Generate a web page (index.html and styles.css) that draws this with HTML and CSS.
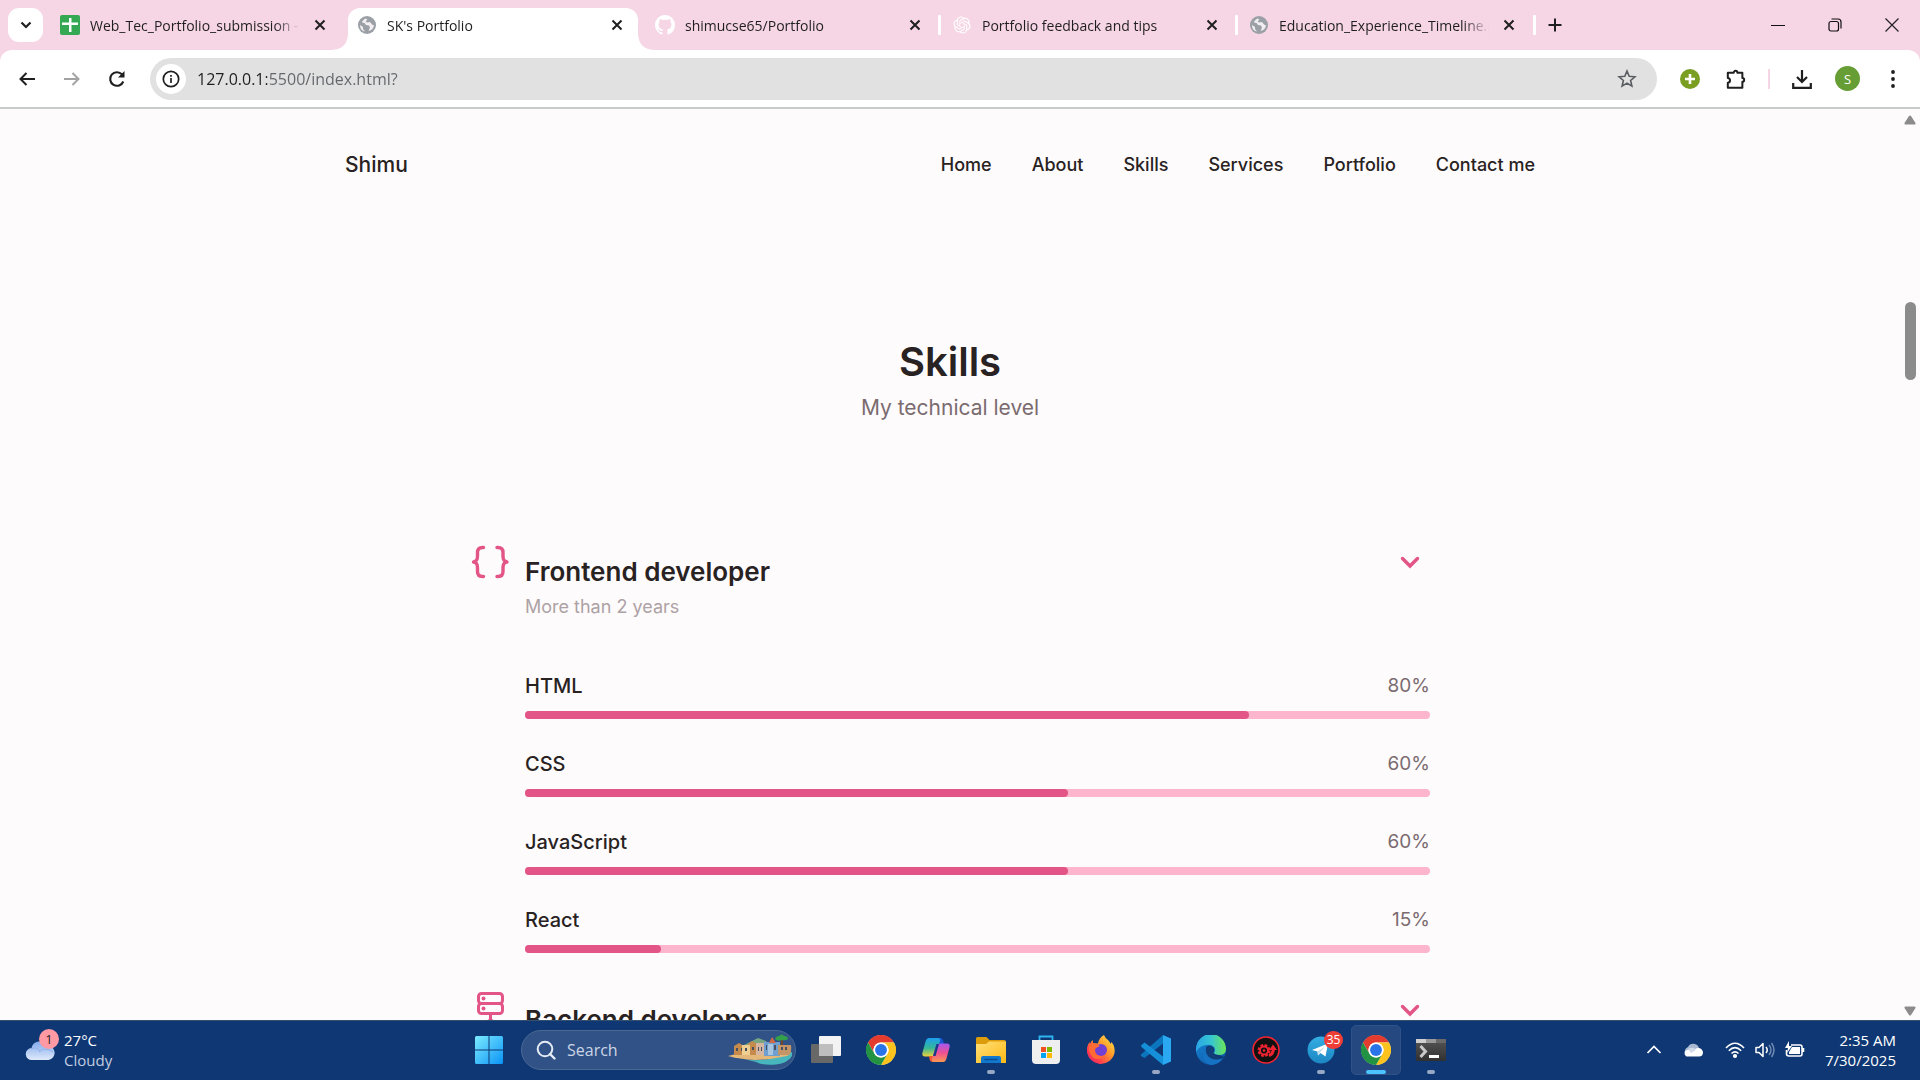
FILE: index.html
```html
<!DOCTYPE html>
<html lang="en">
<head>
<meta charset="utf-8">
<title>SK's Portfolio</title>
<link rel="stylesheet" href="styles.css">
</head>
<body>
<svg class="defs" aria-hidden="true">
  <defs>
    <symbol id="x" viewBox="0 0 14 14"><path d="M2.5 2.5l9 9m0-9l-9 9" fill="none" stroke="currentColor" stroke-width="2"/></symbol>
    <symbol id="globe" viewBox="0 0 20 20"><circle cx="10" cy="10" r="9" fill="#9aa0a6"/><path d="M9 3.500c-2 .5-3.500 2-4 4l2.500.5 1.500 2 3 .5 1 2-1.500 3.500c3-.5 5-2.500 5.500-5.500l-2-1-2-2.500-3 .5-1.500-1.500 2-1zM3 10l3 2v2l2 2.500C5 16 3 13.500 3 10z" fill="#f3eef1"/></symbol>
    <symbol id="chrome" viewBox="0 0 48 48">
      <circle cx="24" cy="24" r="23.500" fill="#fff"/>
      <path d="M24 12h20.800A24 24 0 0 0 3.200 12l10.400 18A12 12 0 0 1 24 12z" fill="#e33b2e"/>
      <path d="M34.400 30L24 48A24 24 0 0 0 44.800 12H24a12 12 0 0 1 10.400 18z" fill="#fcc31f"/>
      <path d="M13.600 30L3.200 12A24 24 0 0 0 24 48l10.400-18a12 12 0 0 1-20.800 0z" fill="#229342"/>
      <circle cx="24" cy="24" r="12" fill="#fff"/><circle cx="24" cy="24" r="9.500" fill="#2a74ea"/>
    </symbol>
    <symbol id="chevron" viewBox="0 0 20 14"><path d="M2.500 3.500L10 11l7.500-7.500" fill="none" stroke="currentColor" stroke-width="3.400" stroke-linecap="round"/></symbol>
    <linearGradient id="gWin" x1="0" y1="0" x2="1" y2="1"><stop offset="0" stop-color="#7cebff"/><stop offset="1" stop-color="#0a93f5"/></linearGradient>
    <linearGradient id="gCloud" x1="0" y1="0" x2="0" y2="1"><stop offset="0" stop-color="#83a9ec"/><stop offset="1" stop-color="#dfe9fa"/></linearGradient>
    <linearGradient id="gFolder" x1="0" y1="0" x2="1" y2="1"><stop offset="0" stop-color="#ffe07a"/><stop offset="1" stop-color="#fdb913"/></linearGradient>
    <linearGradient id="gCopA" x1="0" y1="0" x2="0" y2="1"><stop offset="0" stop-color="#1d9ef0"/><stop offset=".55" stop-color="#35b896"/><stop offset="1" stop-color="#f0d23a"/></linearGradient>
    <linearGradient id="gCopB" x1="0" y1="0" x2="0" y2="1"><stop offset="0" stop-color="#a259f0"/><stop offset=".5" stop-color="#ef4f94"/><stop offset="1" stop-color="#fb9850"/></linearGradient>
    <linearGradient id="gFox" x1="1" y1="0" x2="0" y2="1"><stop offset="0" stop-color="#fff14f"/><stop offset=".4" stop-color="#ff9a2a"/><stop offset=".75" stop-color="#ff3a4f"/><stop offset="1" stop-color="#d61d7c"/></linearGradient>
    <linearGradient id="gEdgeA" x1="0" y1="0" x2="1" y2="0"><stop offset="0" stop-color="#2aa6e6"/><stop offset=".5" stop-color="#35c5d2"/><stop offset="1" stop-color="#6be556"/></linearGradient>
    <linearGradient id="gEdgeB" x1="0" y1="0" x2="1" y2="1"><stop offset="0" stop-color="#1787d8"/><stop offset="1" stop-color="#0c4f9c"/></linearGradient>
    <linearGradient id="gTg" x1="0" y1="0" x2="0" y2="1"><stop offset="0" stop-color="#35aee2"/><stop offset="1" stop-color="#1b86c3"/></linearGradient>
    <linearGradient id="gTerm" x1="0" y1="0" x2="0" y2="1"><stop offset="0" stop-color="#565656"/><stop offset="1" stop-color="#303030"/></linearGradient>
  </defs>
</svg>

<div class="window">
  <div class="tabstrip">
    <button class="tab-search" aria-label="Search tabs"><svg width="12" height="9" viewBox="0 0 12 9"><path d="M1.500 1.500L6 6l4.500-4.500" fill="none" stroke="#1f1f1f" stroke-width="2.200"/></svg></button>
    <div class="tabs">
      <div class="tab">
        <svg class="favicon" viewBox="0 0 20 20"><rect width="20" height="20" rx="2" fill="#34a853"/><path d="M9 3h2.500v4.500H18V10h-6.500v7H9v-7H2V7.500h7z" fill="#fff"/></svg>
        <span class="tab-title">Web_Tec_Portfolio_submission - Google</span>
        <button class="tab-close" aria-label="Close tab"><svg><use href="#x"/></svg></button>
      </div>
      <div class="tab active">
        <svg class="favicon"><use href="#globe"/></svg>
        <span class="tab-title">SK's Portfolio</span>
        <button class="tab-close" aria-label="Close tab"><svg><use href="#x"/></svg></button>
      </div>
      <div class="tab">
        <svg class="favicon" viewBox="0 0 16 16"><path fill="#fff" d="M8 0C3.580 0 0 3.580 0 8c0 3.540 2.290 6.530 5.470 7.590.4.070.55-.17.55-.38 0-.19-.01-.82-.01-1.490-2.010.37-2.530-.49-2.690-.94-.09-.23-.48-.94-.82-1.130-.28-.15-.68-.52-.01-.53.63-.01 1.080.58 1.230.82.72 1.210 1.870.87 2.330.66.07-.52.28-.87.51-1.070-1.780-.2-3.640-.89-3.640-3.950 0-.87.31-1.590.82-2.150-.08-.2-.36-1.020.08-2.120 0 0 .67-.21 2.200.82.64-.18 1.320-.27 2-.27s1.360.09 2 .27c1.530-1.040 2.200-.82 2.200-.82.44 1.100.16 1.920.08 2.120.51.56.82 1.270.82 2.150 0 3.070-1.870 3.750-3.650 3.950.29.25.54.73.54 1.480 0 1.070-.01 1.930-.01 2.200 0 .21.15.46.55.38A8.010 8.010 0 0 0 16 8c0-4.420-3.580-8-8-8z"/></svg>
        <span class="tab-title">shimucse65/Portfolio</span>
        <button class="tab-close" aria-label="Close tab"><svg><use href="#x"/></svg></button>
      </div>
      <div class="tab divided">
        <svg class="favicon" viewBox="-2 -2 28 28"><path fill="#fff" d="M22.2819 9.8211a5.9847 5.9847 0 0 0-.5157-4.9108 6.0462 6.0462 0 0 0-6.5098-2.9A6.0651 6.0651 0 0 0 4.9807 4.1818a5.9847 5.9847 0 0 0-3.9977 2.9 6.0462 6.0462 0 0 0 .7427 7.0966 5.98 5.98 0 0 0 .511 4.9107 6.051 6.051 0 0 0 6.5146 2.9001A5.9847 5.9847 0 0 0 13.2599 24a6.0557 6.0557 0 0 0 5.7718-4.2058 5.9894 5.9894 0 0 0 3.9977-2.9001 6.0557 6.0557 0 0 0-.7475-7.0729zm-9.022 12.6081a4.4755 4.4755 0 0 1-2.8764-1.0408l.1419-.0804 4.7783-2.7582a.7948.7948 0 0 0 .3927-.6813v-6.7369l2.02 1.1686a.071.071 0 0 1 .038.052v5.5826a4.504 4.504 0 0 1-4.4945 4.4944zm-9.6607-4.1254a4.4708 4.4708 0 0 1-.5346-3.0137l.142.0852 4.783 2.7582a.7712.7712 0 0 0 .7806 0l5.8428-3.3685v2.3324a.0804.0804 0 0 1-.0332.0615L9.74 19.9502a4.4992 4.4992 0 0 1-6.1408-1.6464zM2.3408 7.8956a4.485 4.485 0 0 1 2.3655-1.9728V11.6a.7664.7664 0 0 0 .3879.6765l5.8144 3.3543-2.0201 1.1685a.0757.0757 0 0 1-.071 0l-4.8303-2.7865A4.504 4.504 0 0 1 2.3408 7.872zm16.5963 3.8558L13.1038 8.364 15.1192 7.2a.0757.0757 0 0 1 .071 0l4.8303 2.7913a4.4944 4.4944 0 0 1-.6765 8.1042v-5.6772a.79.79 0 0 0-.407-.667zm2.0107-3.0231l-.142-.0852-4.7735-2.7818a.7759.7759 0 0 0-.7854 0L9.409 9.2297V6.8974a.0662.0662 0 0 1 .0284-.0615l4.8303-2.7866a4.4992 4.4992 0 0 1 6.6802 4.66zM8.3065 12.863l-2.02-1.1638a.0804.0804 0 0 1-.038-.0567V6.0742a4.4992 4.4992 0 0 1 7.3757-3.4537l-.142.0805L8.704 5.459a.7948.7948 0 0 0-.3927.6813zm1.0976-2.3654l2.602-1.4998 2.6069 1.4998v2.9994l-2.5974 1.4997-2.6067-1.4997Z"/></svg>
        <span class="tab-title">Portfolio feedback and tips</span>
        <button class="tab-close" aria-label="Close tab"><svg><use href="#x"/></svg></button>
      </div>
      <div class="tab divided">
        <svg class="favicon"><use href="#globe"/></svg>
        <span class="tab-title">Education_Experience_Timeline.pdf</span>
        <button class="tab-close" aria-label="Close tab"><svg><use href="#x"/></svg></button>
      </div>
    </div>
    <button class="new-tab" aria-label="New tab"><svg width="14" height="14" viewBox="0 0 14 14"><path d="M7 .5v13M.5 7h13" stroke="#1f1f1f" stroke-width="2"/></svg></button>
    <div class="window-controls">
      <button aria-label="Minimize"><svg width="14" height="14" viewBox="0 0 14 14"><path d="M0 7.500h14" stroke="#111"/></svg></button>
      <button aria-label="Restore"><svg width="14" height="14" viewBox="0 0 14 14" fill="none" stroke="#111" stroke-width="1.200"><rect x="1" y="3.500" width="9.500" height="9.500" rx="2"/><path d="M3.500 1H10a3 3 0 0 1 3 3v6.500"/></svg></button>
      <button aria-label="Close"><svg width="14" height="14" viewBox="0 0 14 14"><path d="M.5.5l13 13m0-13l-13 13" stroke="#222" stroke-width="1.200"/></svg></button>
    </div>
  </div>

  <div class="toolbar">
    <button class="tool" aria-label="Back"><svg viewBox="0 0 20 20"><path d="M18 10H3.500m6-6l-6 6 6 6" fill="none" stroke="#1f1f1f" stroke-width="2"/></svg></button>
    <button class="tool" aria-label="Forward"><svg viewBox="0 0 20 20"><path d="M2 10h14.500m-6-6l6 6-6 6" fill="none" stroke="#a3a3a3" stroke-width="2"/></svg></button>
    <button class="tool" aria-label="Reload"><svg viewBox="0 0 20 20"><path d="M16.300 12.500A6.800 6.800 0 1 1 15 5.400l1.500 1.600" fill="none" stroke="#1f1f1f" stroke-width="2.100"/><path d="M17.500 2v6.500H11z" fill="#1f1f1f"/></svg></button>
    <div class="omnibox">
      <button class="site-info" aria-label="Site information"><svg viewBox="0 0 18 18"><circle cx="9" cy="9" r="7.700" fill="none" stroke="#1f1f1f" stroke-width="1.700"/><path d="M9 8v5M9 5v1.700" stroke="#1f1f1f" stroke-width="1.700"/></svg></button>
      <input class="url" aria-label="Address" value="127.0.0.1:5500/index.html?">
      <button class="bookmark" aria-label="Bookmark"><svg width="20" height="20" viewBox="0 0 20 20"><path d="M10 2l2.200 5.300 5.700.5-4.300 3.700 1.300 5.600-4.900-3-4.900 3 1.300-5.600L2.100 7.800l5.700-.5z" fill="none" stroke="#5a5d61" stroke-width="1.600"/></svg></button>
    </div>
    <div class="extensions">
      <button class="tool" aria-label="Add"><svg viewBox="0 0 20 20"><circle cx="10" cy="10" r="10" fill="#7a9e22"/><path d="M10 5v10M5 10h10" stroke="#fff" stroke-width="2.600"/></svg></button>
      <button class="tool" aria-label="Extensions"><svg viewBox="0 0 22 22"><path d="M2 4h6.500a2 2 0 0 1 4 0H18v6a2 2 0 0 1 0 4v6.500H2v-5.500c3 0 3.500-5 0-5z" fill="none" stroke="#1f1f1f" stroke-width="2.200" stroke-linejoin="round"/></svg></button>
      <span class="tool-sep"></span>
      <button class="tool" aria-label="Downloads"><svg viewBox="0 0 20 20"><path d="M10 1v12m-5-5l5 5 5-5M1.200 14v4.800h17.600V14" fill="none" stroke="#1f1f1f" stroke-width="2.200"/></svg></button>
      <button class="avatar" aria-label="Profile">S</button>
      <button class="tool" aria-label="Menu"><svg viewBox="0 0 20 20" fill="#1f1f1f"><circle cx="10" cy="3" r="1.900"/><circle cx="10" cy="10" r="1.900"/><circle cx="10" cy="17" r="1.900"/></svg></button>
    </div>
  </div>

  <div class="viewport">
    <div class="page">
      <header class="site-header">
        <a class="logo" href="#">Shimu</a>
        <nav>
          <a href="#home">Home</a>
          <a href="#about">About</a>
          <a href="#skills">Skills</a>
          <a href="#services">Services</a>
          <a href="#portfolio">Portfolio</a>
          <a href="#contact">Contact me</a>
        </nav>
      </header>
      <section class="skills" id="skills">
        <h2>Skills</h2>
        <p class="subtitle">My technical level</p>
        <div class="groups">
          <article class="group">
            <div class="group-head">
              <svg class="group-icon" viewBox="0 0 40 40"><path d="M13.500 5.500h-1c-3.500 0-5 1.500-5 5v3.500c0 4-1 5.500-4 6 3 .5 4 2 4 6v3.500c0 3.500 1.500 5 5 5h1M27 5.500h1c3.500 0 5 1.500 5 5v3.500c0 4 1 5.500 4 6-3 .5-4 2-4 6v3.500c0 3.500-1.500 5-5 5h-1" fill="none" stroke="currentColor" stroke-width="3.400" stroke-linecap="round" stroke-linejoin="round"/></svg>
              <div class="group-title"><h3>Frontend developer</h3><p>More than 2 years</p></div>
              <button class="toggle" aria-label="Toggle frontend"><svg><use href="#chevron"/></svg></button>
            </div>
            <ul class="bars">
              <li><span class="name">HTML</span><span class="value">80%</span><div class="bar"><div class="fill" style="width:80%"></div></div></li>
              <li><span class="name">CSS</span><span class="value">60%</span><div class="bar"><div class="fill" style="width:60%"></div></div></li>
              <li><span class="name">JavaScript</span><span class="value">60%</span><div class="bar"><div class="fill" style="width:60%"></div></div></li>
              <li><span class="name">React</span><span class="value">15%</span><div class="bar"><div class="fill" style="width:15%"></div></div></li>
            </ul>
          </article>
          <article class="group">
            <div class="group-head">
              <svg class="group-icon" viewBox="0 0 40 40"><g fill="none" stroke="currentColor" stroke-width="3"><rect x="8.500" y="3.500" width="24" height="10" rx="3"/><rect x="8.500" y="13.500" width="24" height="10" rx="3"/><path d="M20.500 23.500v8M6 33h29"/></g><circle cx="13.500" cy="8.500" r="2" fill="currentColor"/><circle cx="13.500" cy="18.500" r="2" fill="currentColor"/><circle cx="20.500" cy="33" r="4" fill="currentColor"/></svg>
              <div class="group-title"><h3>Backend developer</h3></div>
              <button class="toggle" aria-label="Toggle backend"><svg><use href="#chevron"/></svg></button>
            </div>
          </article>
        </div>
      </section>
    </div>
    <div class="scrollbar" aria-hidden="true">
      <svg width="14" height="12" viewBox="0 0 14 12"><path d="M6 2L1.500 9q-.5 1.500 1 1.500h9q1.500 0 1-1.500L8 2Q7 .8 6 2z" fill="#8b8b8b"/></svg>
      <div class="track"><div class="thumb"></div></div>
      <svg width="14" height="12" viewBox="0 0 14 12"><path d="M6 10L1.500 3q-.5-1.500 1-1.500h9q1.500 0 1 1.500L8 10q-1 1.200-2 0z" fill="#8b8b8b"/></svg>
    </div>
  </div>

  <footer class="taskbar">
    <button class="weather">
      <span class="weather-icon">
        <svg width="30" height="22" viewBox="0 0 30 22"><path d="M7 21a6 6 0 0 1-.5-12A8.500 8.500 0 0 1 22 6.500 7.300 7.300 0 0 1 23.500 21z" fill="url(#gCloud)"/><path d="M6 10q5-3 9 2M14 13q6-6 14 0" fill="none" stroke="#91b2ec"/></svg>
        <span class="badge pink">1</span>
      </span>
      <span class="weather-text"><span>27°C</span><span class="dim">Cloudy</span></span>
    </button>

    <div class="apps">
      <button class="app" aria-label="Start"><svg viewBox="0 0 30 30" fill="url(#gWin)"><path d="M2.500 1H14.500v13.500H1V2.500Q1 1 2.500 1zM15.500 1H27.500Q29 1 29 2.500v12H15.500zM1 15.500h13.500V29h-12Q1 29 1 27.500zM15.500 15.500H29v12q0 1.500-1.500 1.500h-12z"/></svg></button>
      <label class="search">
        <svg width="20" height="20" viewBox="0 0 20 20"><circle cx="9" cy="9" r="7.300" fill="none" stroke="#e6ecf5" stroke-width="2"/><path d="M14 14l4.500 4.500" stroke="#e6ecf5" stroke-width="2.400" stroke-linecap="round"/></svg>
        <input type="text" placeholder="Search" aria-label="Search">
        <svg width="64" height="32" viewBox="0 0 64 32">
          <path d="M14 12L30 4l8 3 4 5v8H12z" fill="#78a683"/>
          <path d="M4 22Q32 32 64 18v4q-4 7-16 8.500-14 1-20-2.500z" fill="#48b6bd"/>
          <path d="M0 22l12-3 50-3q2 4-3 6-20 4-32 4-16-1-27-4z" fill="#e3b878"/>
          <path d="M6 12l5-3 5 3v9H6zM20 10l4-3 5 3v11h-9z" fill="#c58a4c"/><path d="M14 11h8v10h-8z" fill="#edcf91"/><path d="M28 9h8v12h-8z" fill="#d6b6a1"/><path d="M36 8h8V4l2 4h6v14H36z" fill="#6f9fd0"/><path d="M40 10h5v11h-5z" fill="#a8c6df"/><path d="M50 11h13q1 7-2 10H50z" fill="#c49566"/><path d="M44 3l4 6h-7z" fill="#d06a45"/>
          <path d="M8 14h2v3H8zm5 0h1v3h-1zm4 0h2v3h-2zm7-1h2v3h-2zm6 0h1v4h-1zm3 0h1v4h-1zm5-2h1v5h-1zm8 0h2v5h-2zm7 2h2v3h-2zm4 0h2v3h-2z" fill="#49505f"/>
          <path d="M54 11V5" stroke="#70492f" stroke-width="2"/><path d="M47 5q1-3 4-3 3-3 5 0 4 0 4 3-2 2-6 1-4 2-7-1z" fill="#33a14b"/>
        </svg>
      </label>
      <button class="app" aria-label="Task view"><svg viewBox="0 0 30 30"><rect y="9" width="22" height="19" rx="1" fill="#686868"/><rect x="8" y="1" width="22" height="20" rx="1" fill="#f3f3f3"/><path d="M8 9h14v12H8z" fill="#bebebe"/></svg></button>
      <button class="app" aria-label="Chrome"><svg><use href="#chrome"/></svg></button>
      <button class="app" aria-label="Copilot"><svg viewBox="0 0 30 30"><path d="M14 3h5q2.500 0 3.300 3l.7 3h-4z" fill="#1a55d2"/><path d="M8 3h9q3 0 2 3l-4 13q-1 2.500-4 2.500H4q-3.500 0-2.500-4l3-11Q5.500 3 8 3z" fill="url(#gCopA)"/><path d="M16 27h-4q-3 0-3.500-3L8 21h5z" fill="#f35b33"/><path d="M22 27h-9q-3 0-2-3l4-13q1-2.500 4-2.500h7q3.500 0 2.500 4l-3 11Q24.500 27 22 27z" fill="url(#gCopB)"/><path d="M15.500 9L12 21h2.500L18 9z" fill="#173a8d"/></svg></button>
      <button class="app running" aria-label="File Explorer"><svg viewBox="0 0 30 30"><path d="M0 3.500Q0 2 1.500 2h9l3 3H28q2 0 2 2v4H0z" fill="#dd9c0b"/><path d="M0 9h10l3-2.500h17V28H0z" fill="url(#gFolder)"/><path d="M5 28v-5q0-2 2-2h16q2 0 2 2v5z" fill="#1178ce"/><path d="M8.500 24.500h13" stroke="#0a4d8f" stroke-width="1.500"/></svg></button>
      <button class="app" aria-label="Store"><svg viewBox="0 0 30 30"><path d="M8.500 6V1.500h13V6" fill="none" stroke="#2fb4f0" stroke-width="1.800"/><path d="M1 5h28v20q0 4-4 4H5q-4 0-4-4z" fill="#efefef"/><path d="M10 12h5v5h-5z" fill="#f25022"/><path d="M16 12h5v5h-5z" fill="#7fba00"/><path d="M10 18h5v5h-5z" fill="#00a4ef"/><path d="M16 18h5v5h-5z" fill="#ffb900"/></svg></button>
      <button class="app" aria-label="Firefox"><svg viewBox="0 0 30 30"><path d="M18 0q1 3 4 5 2 2 2.500 4l1-2q4 5 3 11a14 14 0 0 1-27.500-1q-.5-6 2.500-10l.5 2q1-3 3-4v3q3 0 5 .5 1-6 6-8.500z" fill="url(#gFox)"/><circle cx="15" cy="15" r="6" fill="#7040d5"/><path d="M4 9q5-2 10 2l-3 1.500q-3 1-2 5 3 5 9 3-5 6-11 2-6-6-3-13.500z" fill="#ff6a35"/></svg></button>
      <button class="app running" aria-label="Visual Studio Code"><svg viewBox="0 0 30 30"><path d="M22 0l8 3.500v23L22 30z" fill="#2aa8f2"/><path d="M0 19.500L22 0v8.500L3.500 23 0 21z" fill="#0b75bd"/><path d="M0 10.500l3.500-3L22 21.500V30L.5 12z" fill="#1590d8"/></svg></button>
      <button class="app" aria-label="Edge"><svg viewBox="0 0 30 30"><circle cx="15" cy="15" r="15" fill="url(#gEdgeB)"/><path d="M0 14A15 15 0 0 1 30 14q0 6-7 6-4 0-5-2 2-3 0-6-3-3-8-2Q3 11 0 17z" fill="url(#gEdgeA)"/><path d="M10 12q4-3 7 0 2 3 0 6 2 4 11 4-5 4-12 2-8-3-6-12z" fill="#123e78"/><path d="M10 12q-2 8 6 12 6 2 11-1-5 7-12 7Q7 28 7 20q0-5 3-8z" fill="#1672c3"/><path d="M17 12q2 3 0 6 2 2 6 2l5 2q2-1 2-4v5l-5 .5q-7-1-8-5z" fill="#0e3b78"/></svg></button>
      <button class="app" aria-label="Recorder"><svg viewBox="0 0 30 30"><circle cx="15" cy="15" r="13" fill="#111" stroke="#ef2430" stroke-width="1.600"/><path d="M18 20.500q4.500-1.500 4.500-7.500" fill="none" stroke="#ef2430" stroke-width="3"/><path d="M18 15l4-5.500 4 5.500z" fill="#ef2430"/><circle cx="13" cy="15.500" r="5" fill="none" stroke="#ef2430" stroke-width="3" stroke-dasharray="2.500 1.430"/><circle cx="13" cy="15.500" r="4" fill="none" stroke="#ef2430" stroke-width="1.800"/><circle cx="13" cy="15.500" r="1.300" fill="#ef2430"/></svg></button>
      <button class="app running" aria-label="Telegram"><svg viewBox="0 0 30 30"><circle cx="15" cy="15" r="13.500" fill="url(#gTg)"/><path d="M6 15l16-6.500-2.500 13-5-3.500-2.500 2.500-.5-4z" fill="#fff"/><path d="M11.500 16.500l7.500-5-5 6-2 3z" fill="#c2dcec"/></svg><span class="badge red">35</span></button>
      <button class="app running current" aria-label="Chrome, current window"><svg><use href="#chrome"/></svg></button>
      <button class="app running" aria-label="Terminal"><svg viewBox="0 0 30 30"><rect y="4" width="30" height="22" rx="1.500" fill="url(#gTerm)"/><path d="M0 4h10v4H0z" fill="#cfcfcf"/><path d="M10 4h10v4H10z" fill="#999"/><path d="M20 4h10v4H20z" fill="#696969"/><path d="M4.500 11l5 5.500-5 5.500" fill="none" stroke="#c9c9c9" stroke-width="3"/><path d="M13 20h10v3H13z" fill="#fff"/></svg></button>
    </div>

    <div class="tray">
      <button aria-label="Hidden icons"><svg width="16" height="16" viewBox="0 0 16 16"><path d="M1.500 11L8 4.500l6.500 6.500" fill="none" stroke="#fff" stroke-width="1.700"/></svg></button>
      <button class="onedrive" aria-label="OneDrive"><svg width="20" height="16" viewBox="0 0 20 16"><path d="M3 13a5 5 0 0 1 2-8 6 6 0 0 1 11 1l-2 4z" fill="#aab9d2"/><path d="M3.500 14.500A3.500 3.500 0 0 1 4 8l8-1q6-3 8 3 0 4.500-4 4.500z" fill="#fff"/><path d="M5 7q5-3 8 1l-5 3z" fill="#d2dbea"/></svg></button>
      <button class="status" aria-label="Network, volume, battery">
        <svg width="20" height="18" viewBox="0 0 20 18" fill="none" stroke="#fff" stroke-width="1.600"><path d="M1 7q9-9.500 18 0M3.800 9.800q6.200-6.300 12.400 0M6.500 12.500q3.500-3.200 7 0"/><circle cx="10" cy="15" r="1.300" fill="#fff"/></svg>
        <svg width="20" height="18" viewBox="0 0 20 18" fill="none" stroke="#fff" stroke-width="1.500"><path d="M1 6.500h3l4-4v13l-4-4H1z" stroke-linejoin="round"/><path d="M11 6q2.500 3 0 6"/><path d="M14 4q4 5 0 10M16.500 2q5 7 0 14" stroke="#6f89b3"/></svg>
        <svg width="20" height="18" viewBox="0 0 20 18"><path d="M6 4h9q2 0 2 2v7q0 2-2 2H4q-2.500 0-2.500-2V9M18.500 7v4" fill="none" stroke="#fff" stroke-width="1.600"/><path d="M7 6h8v7H4v-2z" fill="#fff"/><path d="M4 0L0 7h3l-1 5 5-7H4z" fill="#fff"/></svg>
      </button>
      <button class="clock"><span>2:35 AM</span><span>7/30/2025</span></button>
    </div>
  </footer>
</div>
</body>
</html>
```
FILE: styles.css
```css
* { box-sizing: border-box; }
body { margin: 0; font-family: "Open Sans", "Noto Sans", sans-serif; color: #1f1f1f; }
h2, h3, p, ul { margin: 0; padding: 0; }
ul { list-style: none; }
button { border: 0; padding: 0; background: none; font: inherit; color: inherit; display: flex; align-items: center; justify-content: center; }
a { color: inherit; text-decoration: none; }
svg { display: block; flex: none; }
.defs { position: absolute; width: 0; height: 0; }
.window { display: flex; flex-direction: column; height: 100vh; overflow: hidden; background: #f6d5e4; }

/* Tab strip */
.tabstrip { display: flex; align-items: stretch; height: 50px; flex: none; padding: 8px 0 0 8px; }
.tab-search { width: 35px; height: 34px; border-radius: 11px; background: #fff; }
.tabs { display: flex; margin-left: 8px; }
.tab { position: relative; width: 297px; display: flex; align-items: center; padding: 0 18px 8px 9px; font-size: 14px; }
.tab .favicon { width: 20px; height: 20px; }
.tab .tab-title { flex: 1; margin: 0 10px; white-space: nowrap; overflow: hidden; mask-image: linear-gradient(to right, #000 88%, transparent); }
.tab-close svg { width: 14px; height: 14px; }
.tab-close { width: 20px; height: 20px; }
.tab.active { background: #fff; border-radius: 12px 12px 0 0; width: 290px; margin-right: 8px; padding-right: 11px; }
.tab.active::before, .tab.active::after { content: ""; position: absolute; bottom: 0; width: 14px; height: 14px; }
.tab.active::before { left: -14px; background: radial-gradient(circle at 0 0, transparent 13px, #fff 14px); }
.tab.active::after { right: -14px; background: radial-gradient(circle at 100% 0, transparent 13px, #fff 14px); }
.tab.divided::before { content: ""; position: absolute; left: -5px; top: 7px; width: 3px; height: 20px; border-radius: 1px; background: #fff; }
.new-tab { position: relative; width: 36px; height: 34px; }
.new-tab::before { content: ""; position: absolute; left: -4px; top: 7px; width: 3px; height: 20px; border-radius: 1px; background: #fff; }
.window-controls { display: flex; margin-left: auto; height: 34px; }
.window-controls button { width: 57px; }

/* Toolbar */
.toolbar { display: flex; align-items: center; height: 59px; flex: none; padding: 0 9px 0 9px; gap: 9px; background: #fff; border-bottom: 2px solid #c9cacb; border-radius: 12px 12px 0 0; }
.tool { width: 36px; height: 36px; }
.tool svg { width: 20px; height: 20px; }
.omnibox { flex: 1; display: flex; align-items: center; height: 42px; border-radius: 21px; background: #e1e1e1; padding: 0 20px 0 6px; margin-left: 6px; }
.site-info { width: 30px; height: 30px; border-radius: 50%; background: #fff; }
.site-info svg { width: 18px; height: 18px; }
.url { flex: 1; border: 0; outline: 0; padding: 0; margin-left: 11px; font: 16px "Open Sans", sans-serif; color: transparent; background: linear-gradient(to right, #1f1f1f 70px, #63666a 70px); background-clip: text; -webkit-background-clip: text; }
.extensions { display: flex; align-items: center; gap: 10px; margin-left: 6px; }
.tool-sep { width: 2px; height: 20px; background: #f6d5e4; margin: 0 4px; }
.avatar { width: 25px; height: 25px; border-radius: 50%; background: #669d34; color: #fff; font-size: 13px; margin: 0 5px; }

/* Page */
.viewport { flex: 1; min-height: 0; display: flex; background: #fefbfc; overflow: hidden; font-family: Inter, sans-serif; color: #282222; }
.page { flex: 1; overflow: hidden; padding: 0 20px; }
.site-header { max-width: 1210px; height: 110px; margin: 0 auto; display: flex; align-items: center; justify-content: space-between; padding-right: 20px; font-weight: 500; }
.logo { font-size: 21px; }
.site-header nav { display: flex; gap: 40px; font-size: 18px; }
.skills { padding-top: 113px; }
.skills h2 { text-align: center; font-size: 40px; line-height: 60px; font-weight: 600; }
.subtitle { text-align: center; font-size: 21px; line-height: 32px; color: #7a6b70; }
.groups { max-width: 960px; margin: 118px auto 0; display: grid; gap: 37px; }
.group-head { display: flex; align-items: flex-start; gap: 15px; }
.group-icon { width: 40px; height: 40px; color: #e25586; }
.group-title { flex: 1; padding-top: 11px; }
.group-title h3 { font-size: 26px; line-height: 38px; font-weight: 600; }
.group-title p { font-size: 18px; line-height: 32px; color: #ada2a5; }
.toggle { width: 40px; height: 40px; color: #e25586; }
.toggle svg { width: 20px; height: 14px; }
.bars { display: grid; gap: 28px; padding-left: 55px; margin-top: 46px; }
.bars li { display: grid; grid-template-columns: 1fr auto; row-gap: 8px; font-size: 20px; line-height: 34px; }
.name { font-weight: 500; }
.value { font-size: 19px; color: #7a6b70; }
.bar { grid-column: 1 / -1; height: 8px; border-radius: 4px; background: #fdb4cd; }
.fill { height: 8px; border-radius: 4px; background: #e25586; }
.scrollbar { width: 20px; display: flex; flex-direction: column; align-items: center; padding: 5px 0 3px; }
.track { flex: 1; width: 11px; padding-top: 176px; }
.thumb { height: 78px; border-radius: 6px; background: #8b8b8b; }

/* Taskbar */
.taskbar { height: 60px; flex: none; display: grid; grid-template-columns: 1fr auto 1fr; align-items: center; background: #0e3773; border-top: 1px solid #33506f; padding-bottom: 1px; color: #fff; font-size: 15px; line-height: 20px; }
.weather { justify-self: start; gap: 9px; margin-left: 25px; }
.weather-icon { position: relative; }
.weather-text { display: flex; flex-direction: column; align-items: flex-start; }
.dim { color: #c2cde0; }
.badge { position: absolute; display: grid; place-items: center; border-radius: 10px; line-height: 18px; }
.badge.pink { width: 20px; height: 20px; right: -4px; top: -10px; background: #ff99a4; color: #1f1f1f; font-size: 13px; }
.badge.red { width: 19px; height: 18px; right: 3px; top: 6px; background: #ef3e37; font-size: 12px; }
.apps { display: flex; align-items: center; gap: 5px; }
.app { position: relative; width: 50px; height: 50px; border-radius: 5px; }
.app > svg { width: 30px; height: 30px; }
.running::after { content: ""; position: absolute; bottom: 1px; width: 8px; height: 4px; border-radius: 2px; background: #98a8c4; }
.current { background: #24487f; border: 1px solid #305287; }
.current::after { width: 20px; background: #4cc2ff; bottom: 0; }
.search { display: flex; align-items: center; width: 275px; height: 40px; margin-left: 2px; border-radius: 20px; background: #305287; border: 1px solid #4b6995; padding: 0 3px 0 14px; }
.search input { flex: 1; min-width: 0; border: 0; outline: 0; background: none; padding: 0 0 0 11px; font: 16px "Open Sans", sans-serif; color: #fff; }
.search input::placeholder { color: #ccd6e5; opacity: 1; }
.tray { justify-self: end; display: flex; align-items: center; margin-right: 24px; }
.onedrive { margin: 0 22px 0 21px; }
.status { gap: 10px; }
.clock { flex-direction: column; align-items: flex-end; margin-left: 20px; }
```
